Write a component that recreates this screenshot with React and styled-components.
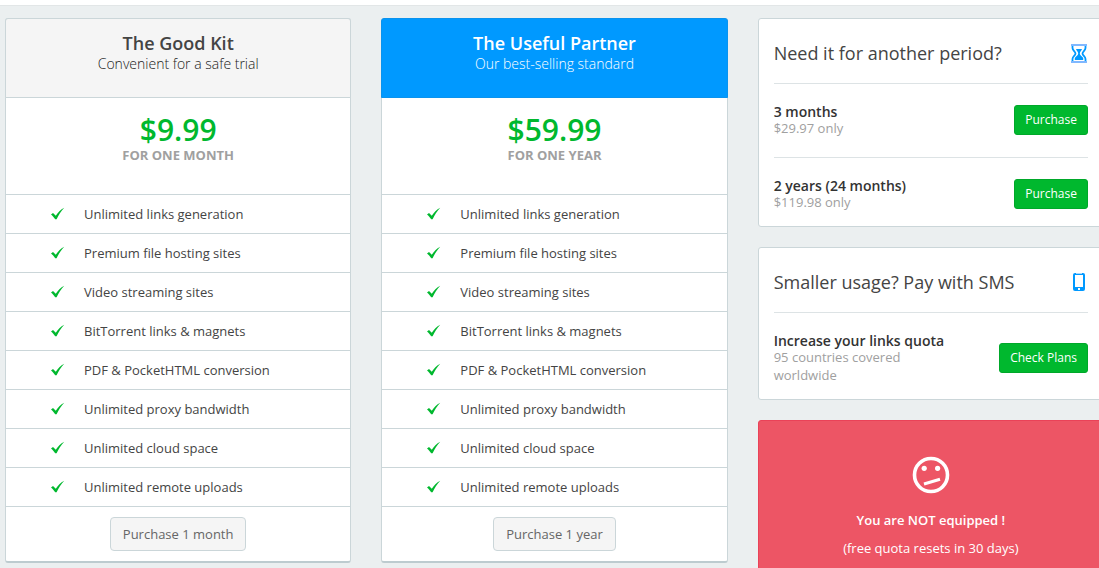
import React from 'react'
import styled, { createGlobalStyle } from 'styled-components'

const GlobalStyle = createGlobalStyle`
* {
box-sizing: border-box;
}
html {
scrollbar-width: none;
}
body {
margin: 0;
background-color: #ebeff0;
color: #333;
font-family: "Open Sans", "Noto Sans", sans-serif;
font-size: 13px;
line-height: 18px;
}
h2, h3, p, ul {
margin: 0;
padding: 0;
}
button {
font-family: inherit;
cursor: pointer;
}
`

const Page = styled.div`
min-height: 100vh;
overflow-x: clip;
`

const TopBar = styled.header`
height: 6px;
background-color: #fff;
border-bottom: 1px solid #e2e6e7;
`

const Columns = styled.main`
display: grid;
grid-template-columns: repeat(3, minmax(0, 1fr));
gap: 30px;
align-items: start;
margin: 12px -5px 0 5px;
`

const PlanCard = styled.section`
background-color: #fff;
border: 1px solid #cbd6d9;
border-bottom: 2px solid #bdcbcf;
border-radius: 3px;
text-align: center;
`

const PlanHeader = styled.div`
height: 80px;
margin: -1px -1px 0;
padding-top: 12px;
border: 1px solid ${props => props.$featured ? '#0a93ee' : '#cbd6d9'};
border-radius: 3px 3px 0 0;
background-color: ${props => props.$featured ? '#0099ff' : '#f5f5f5'};
color: ${props => props.$featured ? '#fff' : '#444'};
`

const PlanName = styled.h2`
font-size: 18px;
font-weight: 600;
line-height: 24px;
`

const PlanTagline = styled.p`
color: ${props => props.$featured ? '#fff' : '#222'};
font-size: 14px;
font-weight: 300;
line-height: 18px;
`

const PriceBox = styled.div`
height: 97px;
padding-top: 14px;
border-bottom: 1px solid #cbd6d9;
`

const Price = styled.p`
color: #00b82e;
font-size: 30px;
font-weight: 600;
line-height: 36px;
`

const Period = styled.p`
color: #a0a0a0;
font-size: 13px;
font-weight: 700;
line-height: 14px;
text-transform: uppercase;
`

const Features = styled.ul`
list-style: none;
text-align: left;
`

const Feature = styled.li`
display: flex;
align-items: center;
gap: 19px;
height: 39px;
padding-left: 44px;
border-bottom: 1px solid #cbd6d9;
color: #444;
`

const PlanFooter = styled.div`
padding: 10px;
`

const PlanButton = styled.button`
height: 34px;
padding: 0 12px;
border: 1px solid #cbd6d9;
border-radius: 4px;
background-color: #f5f5f5;
color: #666;
font-size: 13px;
`

const Sidebar = styled.aside`
display: flex;
flex-direction: column;
gap: 20px;
`

const Panel = styled.section`
padding: 0 15px;
background-color: #fff;
border: 1px solid #cbd6d9;
border-radius: 3px;
`

const PanelHeader = styled.div`
display: flex;
align-items: center;
justify-content: space-between;
height: 65px;
padding-top: 4px;
border-bottom: 1px solid #dde3e5;
color: #0099ff;
`

const PanelTitle = styled.h2`
color: #444;
font-size: 18px;
font-weight: 400;
line-height: 24px;
`

const Offer = styled.div`
display: flex;
align-items: center;
justify-content: space-between;
padding: 20px 0;

& + & {
border-top: 1px solid #dde3e5;
}

&:last-child {
padding-bottom: 15px;
}
`

const OfferText = styled.div`
max-width: 180px;
`

const OfferTitle = styled.h3`
font-size: 14px;
font-weight: 600;
line-height: 15px;
`

const OfferNote = styled.p`
color: #a0a0a0;
line-height: 18px;
`

const BuyButton = styled.button`
height: 30px;
margin-bottom: 2px;
padding: 0 10px;
border: 1px solid #00a82a;
border-radius: 3px;
background-color: #00b82e;
color: #fff;
font-size: 12px;
`

const Notice = styled.section`
display: flex;
flex-direction: column;
align-items: center;
gap: 10px;
padding: 35px 15px;
border: 1px solid #ea4258;
border-radius: 3px;
background-color: #ed5565;
color: #fff;
text-align: center;

strong {
display: block;
margin-top: 7px;
font-weight: 600;
}
`

const CheckIcon = () => (
  <svg width="15" height="14" viewBox="0 0 15 14" aria-hidden="true">
    <path d="M1 7.4 L3 6 L5.8 8.8 C7.8 5.6 10.6 2.6 14.2 0.8 C10.9 4.6 8.6 8 6.6 12.3 H5.2 C4 10.3 2.6 8.6 1 7.4 Z" fill="#00b82e" />
  </svg>
)

const HourglassIcon = () => (
  <svg width="18" height="20" viewBox="0 0 18 20" fill="none" aria-hidden="true">
    <path d="M1 2 H17 M1 19 H17" stroke="#80b8ff" strokeWidth="2" />
    <path d="M2.5 3 V5 C2.5 7.5 5.5 8.5 5.5 10.5 C5.5 12.5 2.5 13.5 2.5 16 V18 M15.5 3 V5 C15.5 7.5 12.5 8.5 12.5 10.5 C12.5 12.5 15.5 13.5 15.5 16 V18" stroke="currentColor" strokeWidth="1.8" />
    <path d="M6 6 H12 C11.5 8 9.8 8.5 9.8 10.5 C9.8 12.5 12 13 13.2 15 V17 H4.8 V15 C6 13 8.2 12.5 8.2 10.5 C8.2 8.5 6.5 8 6 6 Z" fill="currentColor" />
  </svg>
)

const PhoneIcon = () => (
  <svg width="18" height="20" viewBox="0 0 18 20" aria-hidden="true">
    <rect x="3" y="1" width="12" height="18" rx="2" fill="currentColor" />
    <rect x="5" y="3" width="8" height="12" fill="#fff" />
    <path d="M6 1.5 H12" stroke="#a9d8ff" />
    <rect x="8" y="16" width="2" height="2" fill="#fff" />
  </svg>
)

const ConfusedIcon = () => (
  <svg width="38" height="38" viewBox="0 0 38 38" fill="none" stroke="#fff" aria-hidden="true">
    <circle cx="19" cy="19" r="16.5" strokeWidth="3.6" />
    <circle cx="12.2" cy="12.3" r="2.6" fill="#fff" stroke="none" />
    <circle cx="25.6" cy="12.3" r="2.6" fill="#fff" stroke="none" />
    <path d="M12 28 L28 23.3" strokeWidth="3" />
  </svg>
)

const features = [
  'Unlimited links generation',
  'Premium file hosting sites',
  'Video streaming sites',
  'BitTorrent links & magnets',
  'PDF & PocketHTML conversion',
  'Unlimited proxy bandwidth',
  'Unlimited cloud space',
  'Unlimited remote uploads',
]

const Plan = ({ name, tagline, price, period, action, featured }) => (
  <PlanCard>
    <PlanHeader $featured={featured}>
      <PlanName>{name}</PlanName>
      <PlanTagline $featured={featured}>{tagline}</PlanTagline>
    </PlanHeader>
    <PriceBox>
      <Price>{price}</Price>
      <Period>{period}</Period>
    </PriceBox>
    <Features>
      {features.map(item => (
        <Feature key={item}><CheckIcon />{item}</Feature>
      ))}
    </Features>
    <PlanFooter>
      <PlanButton>{action}</PlanButton>
    </PlanFooter>
  </PlanCard>
)

const OfferRow = ({ title, note, action }) => (
  <Offer>
    <OfferText>
      <OfferTitle>{title}</OfferTitle>
      <OfferNote>{note}</OfferNote>
    </OfferText>
    <BuyButton>{action}</BuyButton>
  </Offer>
)

const App = () => {
  return (
    <Page>
      <GlobalStyle />
      <TopBar />
      <Columns>
        <Plan
          name="The Good Kit"
          tagline="Convenient for a safe trial"
          price="$9.99"
          period="For one month"
          action="Purchase 1 month"
        />
        <Plan
          featured
          name="The Useful Partner"
          tagline="Our best-selling standard"
          price="$59.99"
          period="For one year"
          action="Purchase 1 year"
        />
        <Sidebar>
          <Panel>
            <PanelHeader>
              <PanelTitle>Need it for another period?</PanelTitle>
              <HourglassIcon />
            </PanelHeader>
            <OfferRow title="3 months" note="$29.97 only" action="Purchase" />
            <OfferRow title="2 years (24 months)" note="$119.98 only" action="Purchase" />
          </Panel>
          <Panel>
            <PanelHeader>
              <PanelTitle>Smaller usage? Pay with SMS</PanelTitle>
              <PhoneIcon />
            </PanelHeader>
            <OfferRow title="Increase your links quota" note="95 countries covered worldwide" action="Check Plans" />
          </Panel>
          <Notice>
            <ConfusedIcon />
            <strong>You are NOT equipped !</strong>
            <p>(free quota resets in 30 days)</p>
          </Notice>
        </Sidebar>
      </Columns>
    </Page>
  )
}

export default App
